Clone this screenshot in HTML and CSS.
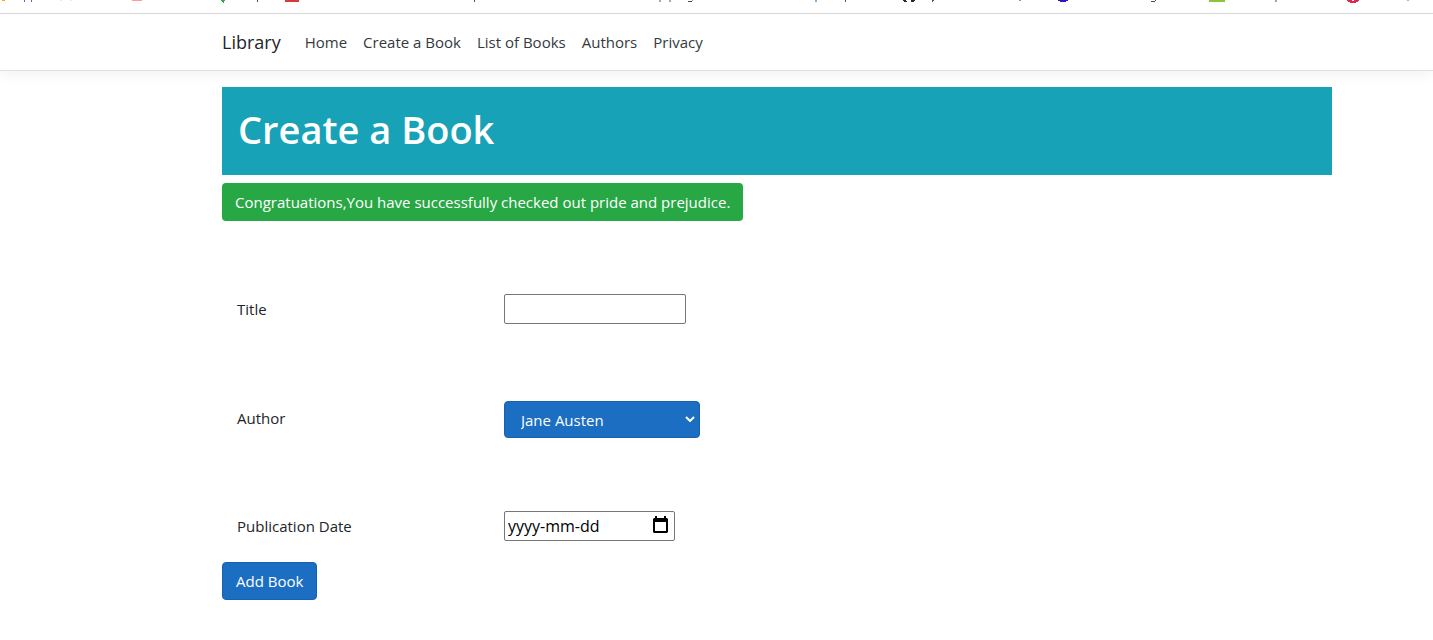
FILE: index.html
```html
<!DOCTYPE html>
<html lang="en">
<head>
<meta charset="utf-8">
<meta name="viewport" content="width=device-width, initial-scale=1">
<title>Create a Book - Library</title>
<link rel="stylesheet" href="styles.css">
</head>
<body>
<div class="bookmarks" aria-hidden="true">
  <svg class="bookmarks-art" width="1433" height="13" viewBox="0 0 1433 13">
    <path fill="#fbae00" d="M2 0h3v1H2z"/>
    <path fill="#6f5fb0" d="M24 0h1v2h-1zM31 0h1v2h-1z"/>
    <path fill="#e3ecf5" d="M60 0h2v1h-2zM70 0h2v1h-2z"/>
    <path fill="#ff9a96" d="M132 0h10v1h-10z"/>
    <path fill="#35a853" d="M221 0h4v1h-1v2h-1V2h-1V1h-1z"/>
    <path fill="#6b3b76" d="M257 0h1v2h-1z"/>
    <path fill="#d63b39" d="M285 0h14v2h-14z"/>
    <path fill="#8c3394" d="M474 0h1v2h-1z"/>
    <path fill="#d9965a" d="M659 0h1v2h-1zM669 0h1v2h-1z"/>
    <path fill="#79bfea" d="M660 0h1v2h-1zM670 0h1v2h-1z"/>
    <path fill="#4a4a4a" d="M688 1h4v1h-4z"/>
    <path fill="#6bb4e8" d="M692 0h1v1h-1z"/>
    <path fill="#6bb4e8" d="M815 0h2v2h-2z"/>
    <path fill="#804b72" d="M845 0h1v2h-1z"/>
    <path fill="#24292e" d="M903 0h3v1h1v1h-3V1h-1zM911 0h4v1h-1v1h-3z"/>
    <path fill="#6a5137" d="M932 0h2v1h-1v1h-1z"/>
    <path fill="#5aa4dc" d="M1019 0h2v1h-2z"/>
    <path fill="#3214b8" d="M1058 0h10v1h-2v1h-6V1h-2z"/>
    <path fill="#4a4a4a" d="M1151 1h4V0h1v1h-1v1h-4z"/>
    <path fill="#8bc53f" d="M1209 0h16v2h-16z"/>
    <path fill="#d98a50" d="M1275 0h1v2h-1z"/>
    <path fill="#79bfea" d="M1276 0h1v2h-1z"/>
    <path fill="#e0264f" d="M1347 0h12v1h-1v1h-2v1h-6V2h-2V1h-1z"/>
    <path fill="#fff" d="M1352 0h2v1h-2z"/>
    <path fill="#8fc0e8" d="M1407 0h2v1h-2z"/>
  </svg>
</div>
<header class="site-header">
  <nav class="navbar page-width">
    <a class="brand" href="#">Library</a>
    <ul class="nav-list">
      <li><a class="nav-link" href="#">Home</a></li>
      <li><a class="nav-link" href="#">Create a Book</a></li>
      <li><a class="nav-link" href="#">List of Books</a></li>
      <li><a class="nav-link" href="#">Authors</a></li>
      <li><a class="nav-link" href="#">Privacy</a></li>
    </ul>
  </nav>
</header>
<main class="page-width">
  <div class="banner"><h1 class="banner-title">Create a Book</h1></div>
  <p class="notice" role="status">Congratuations,You have successfully checked out pride and prejudice.</p>
  <form class="book-form">
    <div class="rows">
      <div class="row">
        <label class="label" for="title">Title</label>
        <input class="field title-field" id="title" type="text">
      </div>
      <div class="row">
        <label class="label" for="author">Author</label>
        <div class="select-cell">
          <div class="control">
            <select class="author-select" id="author"><option>Jane Austen</option></select>
            <svg class="chevron" width="10" height="6" viewBox="0 0 10 6" aria-hidden="true"><path d="M1 1l4 4 4-4" fill="none" stroke="#fff" stroke-width="2"/></svg>
          </div>
        </div>
      </div>
      <div class="row">
        <label class="label" for="date">Publication Date</label>
        <div class="control">
          <input class="field date-field" id="date" type="text" placeholder="yyyy-mm-dd">
          <button class="calendar" type="button" aria-label="Choose a date">
            <svg width="15" height="17" viewBox="0 0 15 17"><path fill="#000" fill-rule="evenodd" d="M2 0h2v2h7V0h2v2h1l1 1v13l-1 1H1l-1-1V3l1-1h1zM2 6v9h11V6z"/></svg>
          </button>
        </div>
      </div>
    </div>
    <button class="submit" type="submit">Add Book</button>
  </form>
</main>
</body>
</html>
```
FILE: styles.css
```css
* { box-sizing: border-box; }

body {
  margin: 0;
  background: #fff;
  color: #212529;
  font: 15px/24px "Segoe UI", "Open Sans", "Noto Sans", sans-serif;
}

.bookmarks {
  overflow: hidden;
  border-bottom: 1px solid #dadbdc;
}
.bookmarks-art { display: block; }

.page-width { padding: 0 101px 0 222px; }

.site-header {
  margin-bottom: 16px;
  border-bottom: 1px solid #dee2e6;
  box-shadow: 0 4px 12px rgba(0, 0, 0, 0.05);
}
.navbar {
  display: flex;
  align-items: center;
  min-height: 56px;
}
.brand {
  margin-right: 16px;
  color: #212529;
  font-size: 18px;
  line-height: 30px;
  text-decoration: none;
}
.nav-list {
  display: flex;
  margin: 0;
  padding: 0;
  list-style: none;
}
.nav-link {
  display: block;
  padding: 8px;
  color: #343a40;
  text-decoration: none;
}

.banner {
  padding: 18px 16px 22px;
  background: #17a2b8;
}
.banner-title {
  margin: 0;
  color: #fff;
  font-size: 38px;
  font-weight: 600;
  line-height: 48px;
}

.notice {
  width: fit-content;
  margin: 8px 0 73px;
  padding: 7px 13px;
  border-radius: 4px;
  background: #28a745;
  color: #fff;
}

.rows {
  display: grid;
  gap: 73px;
}
.row {
  display: grid;
  grid-template-columns: 267px 1fr;
  align-items: center;
  padding-left: 15px;
}

.field {
  height: 30px;
  padding: 1px 3px;
  border: 1px solid #767676;
  border-radius: 2px;
  background: #fff;
  color: #000;
  font: inherit;
}
.title-field { width: 182px; }

.control {
  position: relative;
  width: fit-content;
}
.select-cell { padding-top: 4px; }
.author-select {
  display: block;
  width: 196px;
  height: 37px;
  padding: 0 16px;
  border: 1px solid #1861ac;
  border-radius: 4px;
  background: #1b6ec2;
  color: #fff;
  font: inherit;
  appearance: none;
}
.chevron {
  position: absolute;
  top: 15px;
  right: 5px;
  pointer-events: none;
}

.date-field {
  display: block;
  width: 171px;
  font-size: 16px;
}
.date-field::placeholder { color: #000; opacity: 1; }
.calendar {
  position: absolute;
  top: 5px;
  right: 7px;
  padding: 0;
  border: 0;
  background: none;
}
.calendar svg { display: block; }

.submit {
  display: block;
  margin-top: 21px;
  padding: 6px 13px;
  border: 1px solid #1861ac;
  border-radius: 4px;
  background: #1b6ec2;
  color: #fff;
  font: inherit;
}
```
